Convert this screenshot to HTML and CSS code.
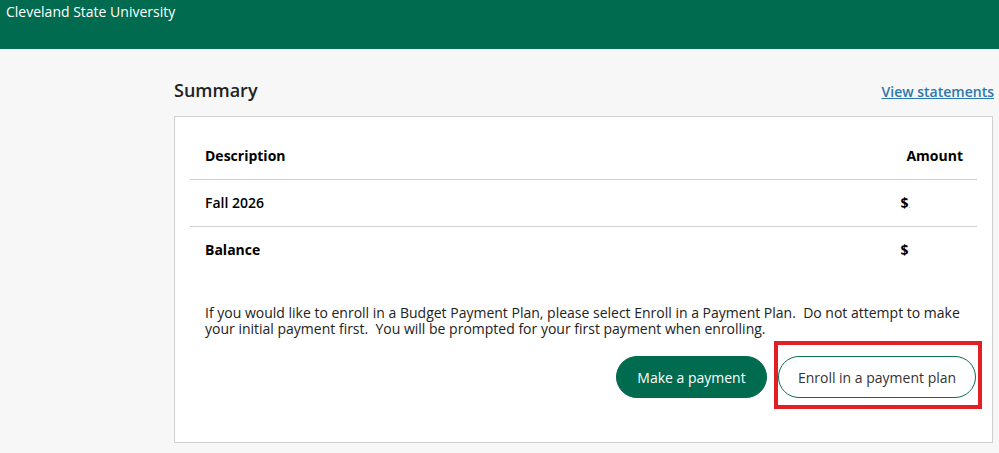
FILE: index.html
```html
<!DOCTYPE html>
<html lang="en">
<head>
<meta charset="utf-8">
<title>Summary</title>
<link rel="stylesheet" href="styles.css">
</head>
<body>
<header class="topbar">
  <span class="brand">Cleveland State University</span>
</header>
<div class="page">
  <aside class="side"></aside>
  <main class="main">
    <div class="title-row">
      <h1 class="title">Summary</h1>
      <a class="link" href="#">View statements</a>
    </div>
    <section class="card">
      <table class="tbl">
        <thead>
          <tr><th class="desc">Description</th><th class="amt">Amount</th></tr>
        </thead>
        <tbody>
          <tr class="line"><td class="desc">Fall 2026</td><td class="amt">$<span class="dot">.</span></td></tr>
          <tr><td class="desc bold">Balance</td><td class="amt">$</td></tr>
        </tbody>
      </table>
      <p class="note">If you would like to enroll in a Budget Payment Plan, please select Enroll in a Payment Plan.&nbsp; Do not attempt to make your initial payment first.&nbsp; You will be prompted for your first payment when enrolling.</p>
      <div class="actions">
        <button class="btn primary">Make a payment</button>
        <span class="highlight"><button class="btn outline">Enroll in a payment plan</button></span>
      </div>
    </section>
  </main>
</div>
</body>
</html>
```
FILE: styles.css
```css
* { box-sizing: border-box; }
html, body { margin: 0; padding: 0; }
body {
  background: #f7f7f7;
  font-family: "Open Sans", "Noto Sans", sans-serif;
  color: #111;
  width: 999px;
  height: 453px;
  overflow: hidden;
}
.topbar {
  background: #006b4e;
  height: 49px;
  padding: 0 6px;
}
.brand {
  color: #fff;
  font-size: 14px;
  line-height: 22px;
}
.page {
  display: grid;
  grid-template-columns: 174px 1fr;
  padding-right: 5px;
}
.main { padding-top: 28px; }
.title-row {
  display: flex;
  justify-content: space-between;
  align-items: baseline;
}
.title {
  margin: 0;
  font-size: 18px;
  font-weight: 600;
  line-height: 26px;
  color: #222;
}
.link {
  font-size: 14px;
  font-weight: 600;
  color: #2b78ab;
  text-decoration: underline;
}
.card {
  margin-top: 13px;
  width: 819px;
  background: #fff;
  border: 1px solid #d0d0d0;
  padding: 15px 15px 44px;
}
.tbl {
  width: 100%;
  border-collapse: collapse;
  font-size: 14px;
}
.tbl th, .tbl td {
  height: 47px;
  padding: 0 15px;
  text-align: left;
  vertical-align: middle;
  color: #000;
}
.tbl th { font-weight: 700; }
.tbl thead tr, .tbl tr.line { border-bottom: 1px solid #d0d0d0; }
.tbl .amt { width: 78px; padding-right: 14px; text-align: right; }
.tbl td.amt { text-align: left; font-weight: 700; padding-left: 9px; }
.dot { font-size: 6px; font-weight: 400; }
.tbl td.desc { font-weight: 600; }
.tbl td.desc.bold { font-weight: 700; }
.note {
  margin: 32px 15px 0;
  font-size: 14px;
  line-height: 16px;
  color: #222;
}
.actions {
  display: flex;
  justify-content: flex-end;
  align-items: center;
  gap: 11px;
  margin-top: 19px;
  padding-right: 1px;
}
.btn {
  font-family: "Open Sans", "Noto Sans", sans-serif;
  font-size: 14px;
  height: 42px;
  border-radius: 21px;
  padding: 0 18px;
  white-space: nowrap;
  cursor: pointer;
  display: block;
}
.primary {
  background: #006b4e;
  color: #fff;
  border: 1px solid #006b4e;
  width: 151px;
}
.outline {
  background: #fff;
  color: #333;
  border: 1px solid #0d6e52;
  width: 198px;
}
.highlight {
  display: block;
  border: 4px solid #e31e24;
  margin: -15px -6px -11px -4px;
  padding: 11px 2px 7px 0;
}
```
